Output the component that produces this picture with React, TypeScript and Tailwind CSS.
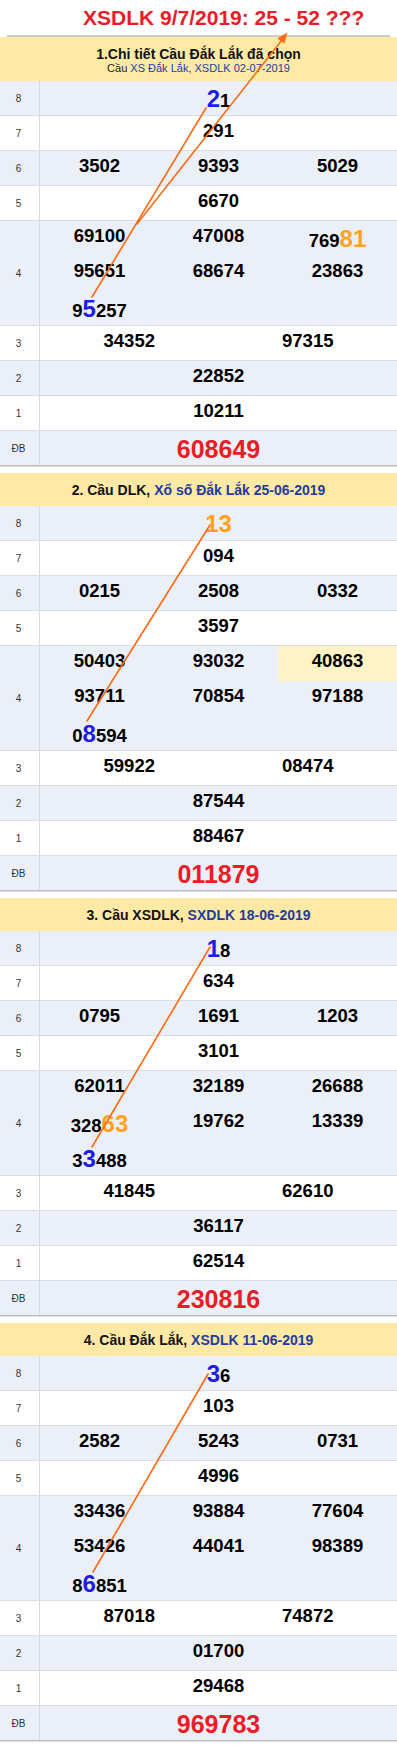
import React from "react";

type Seg = { t: string; c: "n" | "b" | "o" };

function parse(v: string): Seg[] {
  const out: Seg[] = [];
  let mode: "n" | "b" | "o" = "n";
  let buf = "";
  const flush = () => {
    if (buf) {
      out.push({ t: buf, c: mode });
      buf = "";
    }
  };
  for (const ch of v) {
    if (ch === "{") {
      flush();
      mode = "b";
    } else if (ch === "}") {
      flush();
      mode = "n";
    } else if (ch === "<") {
      flush();
      mode = "o";
    } else if (ch === ">") {
      flush();
      mode = "n";
    } else buf += ch;
  }
  flush();
  return out;
}

function Num({ v, hl }: { v: string; hl?: boolean }) {
  return (
    <div className={hl ? "pt-[4px] text-center leading-[normal] bg-[#fff3c6]" : "pt-[4px] text-center leading-[normal]"}>
      {parse(v).map((s, i) =>
        s.c === "n" ? (
          <span key={i}>{s.t}</span>
        ) : s.c === "b" ? (
          <span key={i} className="text-[24px] text-[#1d1de8]">
            {s.t}
          </span>
        ) : (
          <span key={i} className="text-[24px] text-[#ffa31c]">
            {s.t}
          </span>
        )
      )}
    </div>
  );
}

function Row({
  label,
  alt,
  tall,
  last,
  children,
}: {
  label: string;
  alt: boolean;
  tall?: boolean;
  last?: boolean;
  children: React.ReactNode;
}) {
  const cls = [
    "flex",
    tall ? "h-[105px]" : last ? "h-[34px]" : "h-[35px]",
    alt ? "bg-[#ebeff8]" : "bg-white",
    last ? "" : "border-b border-[#d9dde5]",
  ].join(" ");
  return (
    <div className={cls}>
      <div className="w-[40px] shrink-0 border-r border-[#d7dae1] flex items-center justify-center pr-[2px] text-[10px] text-[#333333] font-normal">
        {label}
      </div>
      <div className="flex-1 text-[18.5px] font-bold text-black">{children}</div>
    </div>
  );
}

type SecData = {
  header: React.ReactNode;
  tallHeader?: boolean;
  r8: string;
  r7: string;
  r6: string[];
  r5: string;
  r4: string[];
  hl?: number;
  r3: string[];
  r2: string;
  r1: string;
  db: string;
};

function Section({ d }: { d: SecData }) {
  return (
    <div className="mb-[6px]">
      <div
        className={
          d.tallHeader
            ? "h-[44px] bg-[#ffe9a5] flex flex-col items-center justify-center pt-[1px]"
            : "h-[33px] bg-[#ffe9a5] flex flex-col items-center justify-center"
        }
      >
        {d.header}
      </div>
      <Row label="8" alt>
        <Num v={d.r8} />
      </Row>
      <Row label="7" alt={false}>
        <Num v={d.r7} />
      </Row>
      <Row label="6" alt>
        <div className="grid grid-cols-3">
          {d.r6.map((v, i) => (
            <Num key={i} v={v} />
          ))}
        </div>
      </Row>
      <Row label="5" alt={false}>
        <Num v={d.r5} />
      </Row>
      <Row label="4" alt tall>
        <div className="grid grid-cols-3 grid-rows-[35px_35px_34px]">
          {d.r4.map((v, i) => (
            <Num key={i} v={v} hl={d.hl === i} />
          ))}
        </div>
      </Row>
      <Row label="3" alt={false}>
        <div className="grid grid-cols-2">
          {d.r3.map((v, i) => (
            <Num key={i} v={v} />
          ))}
        </div>
      </Row>
      <Row label="2" alt>
        <Num v={d.r2} />
      </Row>
      <Row label="1" alt={false}>
        <Num v={d.r1} />
      </Row>
      <Row label="ĐB" alt last>
        <div className="pt-[4px] text-center leading-[normal] text-[25px] text-[#ec1c27]">{d.db}</div>
      </Row>
      <div className="h-[1px] bg-[#bdbdbd]" />
      <div className="h-[1px] bg-[#dedede]" />
    </div>
  );
}

const H = ({ a, b }: { a: string; b: string }) => (
  <div className="text-[14px] font-bold leading-[normal] text-[#111111]">
    {a}
    <span className="text-[#1f3c9c]">{b}</span>
  </div>
);

const sections: SecData[] = [
  {
    tallHeader: true,
    header: (
      <>
        <div className="text-[14px] font-bold leading-[normal] text-[#111111]">1.Chi tiết Cầu Đắk Lắk đã chọn</div>
        <div className="text-[11px] leading-[normal] text-[#222222]">
          Cầu <span className="text-[#2340a0]">XS Đắk Lắk, XSDLK 02-07-2019</span>
        </div>
      </>
    ),
    r8: "{2}1",
    r7: "291",
    r6: ["3502", "9393", "5029"],
    r5: "6670",
    r4: ["69100", "47008", "769<81>", "95651", "68674", "23863", "9{5}257"],
    r3: ["34352", "97315"],
    r2: "22852",
    r1: "10211",
    db: "608649",
  },
  {
    header: <H a="2. Cầu DLK, " b="Xổ số Đắk Lắk 25-06-2019" />,
    r8: "<13>",
    r7: "094",
    r6: ["0215", "2508", "0332"],
    r5: "3597",
    r4: ["50403", "93032", "40863", "93711", "70854", "97188", "0{8}594"],
    hl: 2,
    r3: ["59922", "08474"],
    r2: "87544",
    r1: "88467",
    db: "011879",
  },
  {
    header: <H a="3. Cầu XSDLK, " b="SXDLK 18-06-2019" />,
    r8: "{1}8",
    r7: "634",
    r6: ["0795", "1691", "1203"],
    r5: "3101",
    r4: ["62011", "32189", "26688", "328<63>", "19762", "13339", "3{3}488"],
    r3: ["41845", "62610"],
    r2: "36117",
    r1: "62514",
    db: "230816",
  },
  {
    header: <H a="4. Cầu Đắk Lắk, " b="XSDLK 11-06-2019" />,
    r8: "{3}6",
    r7: "103",
    r6: ["2582", "5243", "0731"],
    r5: "4996",
    r4: ["33436", "93884", "77604", "53426", "44041", "98389", "8{6}851"],
    r3: ["87018", "74872"],
    r2: "01700",
    r1: "29468",
    db: "969783",
  },
];

export default function App() {
  return (
    <div className="relative w-[397px] bg-white font-['Liberation_Sans',Arial,sans-serif]">
      <div className="h-[35px] pt-[6px] pl-[83px] text-[21px] font-bold leading-[normal] text-[#ec1c27]">
        XSDLK 9/7/2019: 25 - 52 ???
      </div>
      <div className="mx-[7px] h-[2px] bg-[#cccccc]" />
      {sections.map((d, i) => (
        <Section key={i} d={d} />
      ))}
      <svg
        className="absolute left-0 top-0 pointer-events-none"
        width="397"
        height="1748"
        viewBox="0 0 397 1748"
      >
        <g stroke="#ff6a13" strokeWidth="1.6" fill="none" strokeLinecap="round">
          <line x1="92" y1="297" x2="206" y2="108" />
          <line x1="137" y1="224" x2="282" y2="40" />
          <line x1="87" y1="721" x2="210" y2="525" />
          <line x1="92" y1="1147" x2="210" y2="947" />
          <line x1="93" y1="1572" x2="208" y2="1374" />
        </g>
        <polygon points="287.5,32.5 284.3,43.6 277.4,38.2" fill="#ff6a13" />
      </svg>
    </div>
  );
}
